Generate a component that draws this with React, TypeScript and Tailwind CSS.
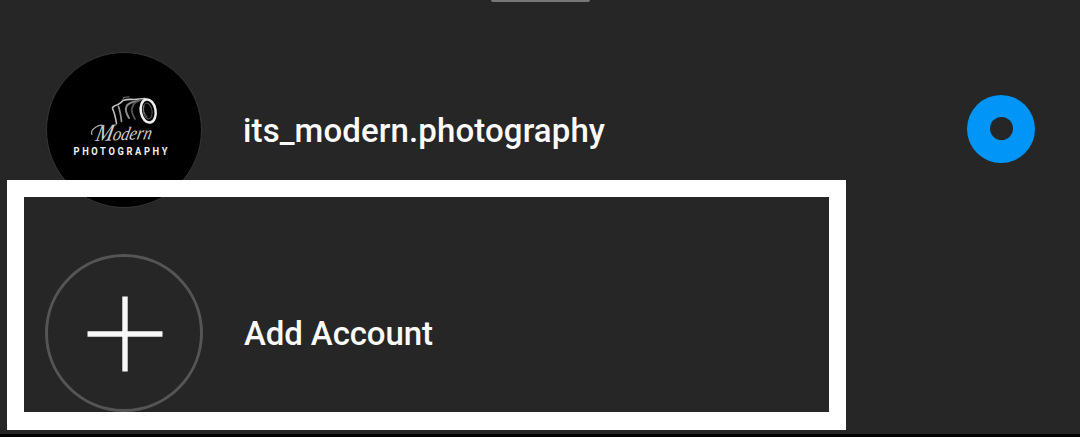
interface LabelProps {
  text: string;
  width: number;
}

// Row label, fitted to a fixed width
function Label({ text, width }: LabelProps) {
  return (
    <svg width={width + 4} height="48" className="ml-[41px] overflow-visible">
      <text
        x="0"
        y="36"
        textLength={width}
        className="fill-[#fafafa] font-['Roboto',sans-serif] text-[33px] font-medium"
      >
        {text}
      </text>
    </svg>
  );
}

function Avatar() {
  return (
    <div className="size-[156px] shrink-0 overflow-hidden rounded-full border border-[#363636] bg-black">
      <svg viewBox="47 53 154 154" className="size-full" fill="none" strokeLinecap="round">
        {/* Camera */}
        <g stroke="#c4c4c4">
          <path d="M116.5 123.5Q115 114 112.5 108.5Q112 106.5 118 104.5Q121 103 123 100.5Q127 99 134 99.5L145 98.5" strokeWidth="1.6" />
          <path d="M123 100L123.5 97.5L129 96.8" strokeWidth="1" stroke="#777" />
          <path d="M121.5 121.5Q120.5 112 118.5 106.5" strokeWidth="1.7" stroke="#999" />
          <path d="M129 118Q124 110 127 105.5Q130 102 138 101" strokeWidth="2" stroke="#8a8a8a" />
          <path d="M135 119Q130 111 133 105.5Q135 102 141 100" strokeWidth="1.8" stroke="#555" />
        </g>
        <ellipse cx="148.2" cy="111" rx="7.4" ry="11.7" transform="rotate(-10 148.2 111)" stroke="#eee" strokeWidth="2.5" />
        <ellipse cx="147.6" cy="111" rx="4.4" ry="8" transform="rotate(-10 147.6 111)" stroke="#555" strokeWidth="1" />
        <path d="M144 106Q142 112 147 117" stroke="#999" strokeWidth="0.8" />
        {/* Script wordmark with a tall initial */}
        <g
          transform="translate(96 139.5) rotate(-2) skewX(-14) translate(-96 -139.5)"
          fill="#cfcfcf"
          className="font-['Liberation_Serif',serif] italic"
        >
          <text x="95" y="141" textLength="56" lengthAdjust="spacingAndGlyphs" className="text-[19px]">
            <tspan className="text-[24px]">M</tspan>odern
          </text>
        </g>
        {/* Entry swash of the M */}
        <path d="M92 134.5Q90 131 96 127Q101 124 103.5 126" stroke="#aaa" strokeWidth="1.2" />
        <text
          x="0"
          y="0"
          textLength="116"
          transform="translate(73.5 155.2) scale(0.81 1)"
          fill="#f0f0f0"
          className="font-['Roboto',sans-serif] text-[11.5px] font-bold"
        >
          PHOTOGRAPHY
        </text>
      </svg>
    </div>
  );
}

function AddIcon() {
  return (
    <div className="flex size-[158px] shrink-0 items-center justify-center rounded-full border-[3px] border-[#555]">
      <svg width="76" height="76" viewBox="0 0 76 76" className="translate-x-px translate-y-px">
        <path d="M38 0.5V75.5M0.5 38H75.5" stroke="#f8f8f8" strokeWidth="5.4" />
      </svg>
    </div>
  );
}

function App() {
  return (
    <div className="relative flex h-[437px] w-[1080px] flex-col overflow-hidden border-b-[3px] border-black bg-[#262626]">
      {/* Sheet handle */}
      <div className="mx-auto h-0.5 w-[99px] shrink-0 rounded-b-sm bg-[#777]" />
      <div className="mt-[26px] flex h-[203px] shrink-0 items-center pr-[45px] pl-[46px]">
        <Avatar />
        <Label text="its_modern.photography" width={362} />
        <div className="mb-0.5 ml-auto flex size-[68px] items-center justify-center rounded-full bg-[#0095f6]">
          <div className="size-[23px] rounded-full bg-[#262626]" />
        </div>
      </div>
      <div className="flex h-[203px] shrink-0 items-center pl-[45px]">
        <AddIcon />
        <Label text="Add Account" width={189} />
      </div>
      {/* Highlight frame over the add account row */}
      <div className="absolute top-[180px] left-[7px] h-[250px] w-[839px] border-[17px] border-b-[18px] border-white" />
    </div>
  );
}

export default App;
